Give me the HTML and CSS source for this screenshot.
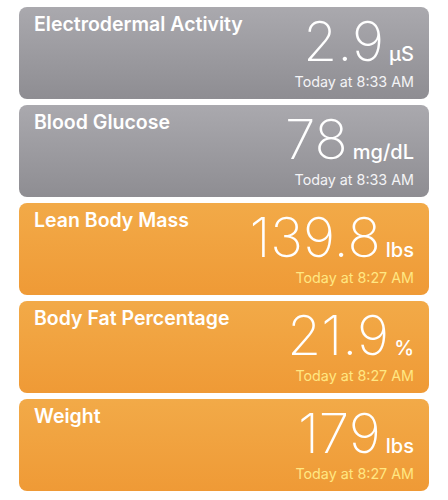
FILE: index.html
```html
<!DOCTYPE html>
<html lang="en">
<head>
  <meta charset="UTF-8">
  <title>Health Data</title>
  <link rel="stylesheet" href="styles.css">
</head>
<body>
  <div class="list">
    <div class="card gray">
      <div class="title">Electrodermal Activity</div>
      <div class="reading">
        <div class="value"><span class="num">2.9</span><span class="unit">µS</span></div>
        <div class="time">Today at 8:33 AM</div>
      </div>
    </div>
    <div class="card gray">
      <div class="title">Blood Glucose</div>
      <div class="reading">
        <div class="value"><span class="num">78</span><span class="unit">mg/dL</span></div>
        <div class="time">Today at 8:33 AM</div>
      </div>
    </div>
    <div class="card orange">
      <div class="title">Lean Body Mass</div>
      <div class="reading">
        <div class="value"><span class="num">139.8</span><span class="unit">lbs</span></div>
        <div class="time">Today at 8:27 AM</div>
      </div>
    </div>
    <div class="card orange">
      <div class="title">Body Fat Percentage</div>
      <div class="reading">
        <div class="value"><span class="num">21.9</span><span class="unit">%</span></div>
        <div class="time">Today at 8:27 AM</div>
      </div>
    </div>
    <div class="card orange">
      <div class="title">Weight</div>
      <div class="reading">
        <div class="value"><span class="num">179</span><span class="unit">lbs</span></div>
        <div class="time">Today at 8:27 AM</div>
      </div>
    </div>
  </div>
</body>
</html>
```

FILE: styles.css
```css
body {
  margin: 0;
  padding: 7px 19px;
  background: #ffffff;
  font-family: Inter, "Noto Sans", sans-serif;
  color: #ffffff;
}

.list {
  display: flex;
  flex-direction: column;
  gap: 6px;
}

.card {
  height: 92px;
  box-sizing: border-box;
  padding: 6px 15px 0;
  border-radius: 8px;
  display: flex;
  justify-content: space-between;
  align-items: flex-start;
}

.card.gray {
  background: linear-gradient(to bottom, #aaa9ae, #8e8d92);
}

.card.orange {
  background: linear-gradient(to bottom, #f2aa48, #ef9a36);
}

.title {
  font-size: 19.5px;
  line-height: 23px;
  font-weight: 600;
}

.reading {
  display: flex;
  flex-direction: column;
  align-items: flex-end;
}

.value {
  display: flex;
  align-items: baseline;
  white-space: nowrap;
}

.num {
  font-size: 55px;
  line-height: 56px;
  font-weight: 200;
}

.unit {
  font-size: 20px;
  line-height: 20px;
  font-weight: 500;
  margin-left: 5px;
}

.time {
  margin-top: 4px;
  font-size: 14.3px;
  line-height: 18px;
}

.gray .time {
  color: #f4f4f6;
}

.orange .time {
  color: #ffe783;
}
```
